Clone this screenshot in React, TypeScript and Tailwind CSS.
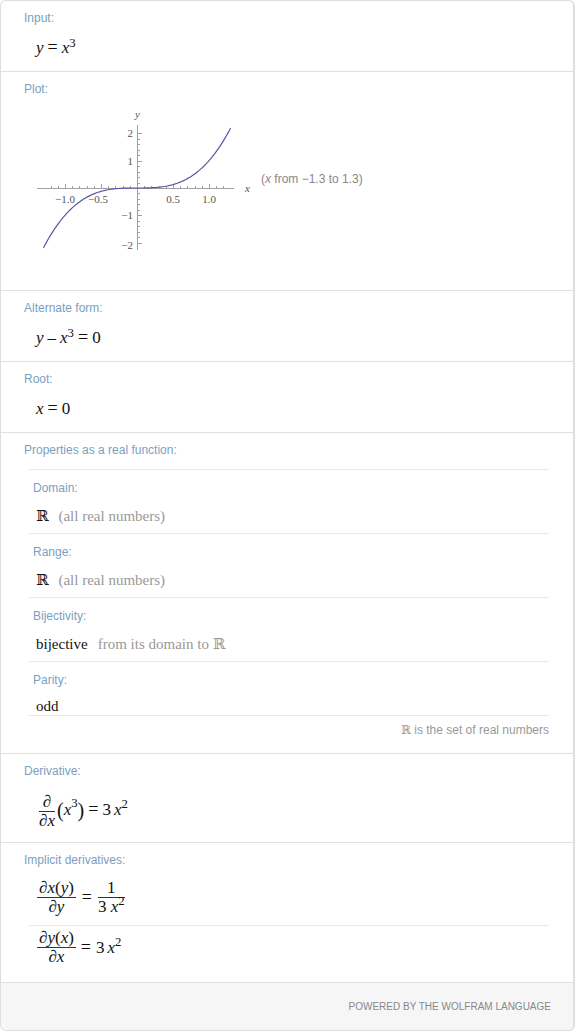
import type { ReactNode } from 'react'

const SANS = "font-['Liberation_Sans',Arial,sans-serif]"
const SERIF = "font-['Liberation_Serif','DejaVu_Serif',serif]"

function Label({ children }: { children: ReactNode }) {
  return <div className={`${SANS} text-[12px] leading-[14px] text-[#7a9fbf]`}>{children}</div>
}

function Pod({ title, children }: { title: string; children: ReactNode }) {
  return (
    <div className="border-b border-[#e0e0e0] pt-[10px] pl-[23px] pr-[24px]">
      <Label>{title}</Label>
      {children}
    </div>
  )
}

function V({ children }: { children: ReactNode }) {
  return <i className="italic">{children}</i>
}

function Eq() {
  return <span className="px-[4px] text-[18px]">=</span>
}

function Frac({ num, den }: { num: ReactNode; den: ReactNode }) {
  return (
    <span className="inline-flex flex-col items-center">
      <span className="h-[18px] leading-[18px] px-[2px] whitespace-nowrap">{num}</span>
      <span className="h-px w-full bg-[#333]" />
      <span className="h-[18px] leading-[18px] whitespace-nowrap">{den}</span>
    </span>
  )
}

function Plot() {
  const X = (x: number) => 116 + 72 * x
  const Y = (y: number) => 82 - 27.3 * y
  const pts = Array.from({ length: 131 }, (_, i) => {
    const x = -1.3 + i * 0.02
    return `${X(x).toFixed(2)},${Y(x ** 3).toFixed(2)}`
  }).join(' ')
  const xt = Array.from({ length: 25 }, (_, i) => Math.round((-1.2 + i * 0.1) * 10) / 10).filter(v => v !== 0)
  const yt = Array.from({ length: 21 }, (_, i) => Math.round((-2 + i * 0.2) * 10) / 10).filter(v => v !== 0)
  return (
    <svg width="240" height="150" viewBox="0 0 240 150" className="shrink-0">
      <g stroke="#a0a0a0" strokeWidth="1" shapeRendering="crispEdges">
        <line x1="16" y1="82.5" x2="213" y2="82.5" />
        <line x1="116.5" y1="19" x2="116.5" y2="144" />
        {xt.map(v => {
          const major = Math.abs((v * 10) % 5) < 0.01
          return <line key={'x' + v} x1={X(v) + 0.5} x2={X(v) + 0.5} y1="82" y2={major ? 78 : 80} />
        })}
        {yt.map(v => {
          const major = Math.abs(v % 1) < 0.01
          return <line key={'y' + v} y1={Y(v) + 0.5} y2={Y(v) + 0.5} x1="117" x2={major ? 121 : 119} />
        })}
      </g>
      <polyline points={pts} fill="none" stroke="#5a54a6" strokeWidth="1.2" />
      <g fill="#555" fontSize="11" fontFamily="'Liberation Serif', serif">
        <text x={X(-1)} y="97" textAnchor="middle">−1.0</text>
        <text x={X(-0.5) - 3} y="97" textAnchor="middle">−0.5</text>
        <text x={X(0.5)} y="97" textAnchor="middle">0.5</text>
        <text x={X(1)} y="97" textAnchor="middle">1.0</text>
        <text x="112" y={Y(2) + 4} textAnchor="end">2</text>
        <text x="112" y={Y(1) + 4} textAnchor="end">1</text>
        <text x="112" y={Y(-1) + 4} textAnchor="end">−1</text>
        <text x="112" y={Y(-2) + 6} textAnchor="end">−2</text>
        <text x="224" y="86" fontStyle="italic">x</text>
        <text x="114" y="12" fontStyle="italic">y</text>
      </g>
    </svg>
  )
}

const props: [string, ReactNode][] = [
  ['Domain:', <>ℝ<span className="ml-[10px] text-[#999]">(all real numbers)</span></>],
  ['Range:', <>ℝ<span className="ml-[10px] text-[#999]">(all real numbers)</span></>],
  ['Bijectivity:', <>bijective<span className="ml-[10px] text-[#999]">from its domain to ℝ</span></>],
]

export default function App() {
  return (
    <div className="w-[575px] bg-white">
      <div className="border border-r-2 border-[#dedede] rounded-[6px] overflow-hidden bg-white text-[#111]">
        <Pod title="Input:">
          <div className={`${SERIF} h-[24px] mt-[10px] ml-[12px] mb-[12px] text-[17px] leading-[24px]`}>
            <V>y</V><Eq /><V>x</V><sup>3</sup>
          </div>
        </Pod>

        <Pod title="Plot:">
          <div className="flex -ml-[3px] mt-[10px] mb-[34px]">
            <Plot />
            <span className={`${SANS} mt-[66px] text-[12px] leading-[14px] text-[#888]`}>
              (<i className="italic">x</i> from −1.3 to 1.3)
            </span>
          </div>
        </Pod>

        <Pod title="Alternate form:">
          <div className={`${SERIF} h-[24px] mt-[10px] ml-[12px] mb-[12px] text-[17px] leading-[24px]`}>
            <V>y</V><span className="px-[4px]">–</span><V>x</V><sup>3</sup><Eq />0
          </div>
        </Pod>

        <Pod title="Root:">
          <div className={`${SERIF} h-[24px] mt-[10px] ml-[12px] mb-[12px] text-[17px] leading-[24px]`}>
            <V>x</V><Eq />0
          </div>
        </Pod>

        <Pod title="Properties as a real function:">
          <div className="ml-[5px] mt-[12px] border-t border-[#e2ebf0]">
            {props.map(([t, v]) => (
              <div key={t} className="border-b border-[#e2ebf0] pt-[11px] pl-[4px] pb-[5px]">
                <Label>{t}</Label>
                <div className={`${SERIF} h-[24px] mt-[9px] pl-[3px] text-[15px] leading-[24px]`}>{v}</div>
              </div>
            ))}
            <div className="border-b border-[#e2ebf0] pt-[11px] pl-[4px]">
              <Label>Parity:</Label>
              <div className={`${SERIF} h-[18px] mt-[10px] pl-[3px] text-[15px] leading-[18px]`}>odd</div>
            </div>
          </div>
          <div className={`${SANS} h-[14px] mt-[7px] mb-[16px] text-right text-[12px] leading-[14px] text-[#999]`}>
            <span className={SERIF}>ℝ</span> is the set of real numbers
          </div>
        </Pod>

        <Pod title="Derivative:">
          <div className={`${SERIF} h-[37px] mt-[15px] mb-[12px] ml-[15px] flex items-center text-[17px]`}>
            <Frac num="∂" den={<>∂<V>x</V></>} />
            <span className="ml-[2px] -mt-[4px] flex items-center">
              <span className="text-[20px] leading-none">(</span>
              <V>x</V><sup>3</sup>
              <span className="text-[20px] leading-none">)</span>
              <Eq />3 <span className="ml-[3px]"><V>x</V><sup>2</sup></span>
            </span>
          </div>
        </Pod>

        <Pod title="Implicit derivatives:">
          <div className="ml-[5px] mt-[12px] mb-[16px]">
            <div className={`${SERIF} h-[47px] border-b border-[#e2ebf0] pb-[10px] pl-[8px] flex items-center text-[17px]`}>
              <Frac num={<>∂<V>x</V>(<V>y</V>)</>} den={<>∂<V>y</V></>} />
              <span className="px-[6px] text-[18px]">=</span>
              <Frac num="1" den={<>3 <V>x</V><sup>2</sup></>} />
            </div>
            <div className={`${SERIF} h-[40px] pt-[3px] pl-[8px] flex items-center text-[17px]`}>
              <Frac num={<>∂<V>y</V>(<V>x</V>)</>} den={<>∂<V>x</V></>} />
              <span className="px-[5px] text-[18px]">=</span>3 <span className="ml-[3px]"><V>x</V><sup>2</sup></span>
            </div>
          </div>
        </Pod>

        <div className="h-[47px] bg-[#f6f6f6] flex items-center justify-end pr-[22px]">
          <span className={`${SANS} text-[10px] text-[#888]`}>POWERED BY THE WOLFRAM LANGUAGE</span>
        </div>
      </div>
    </div>
  )
}
